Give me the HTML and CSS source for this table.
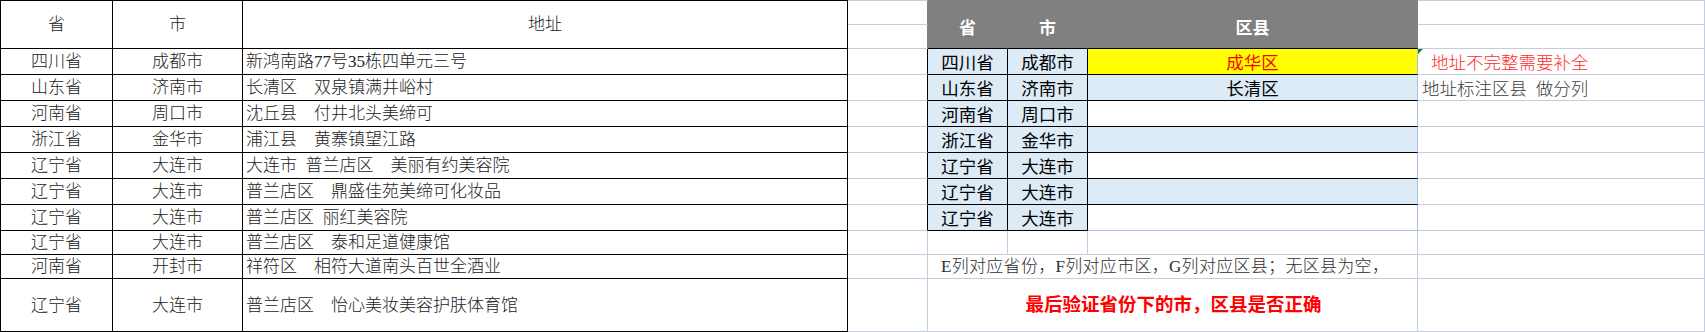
FILE: index.html
```html
<!DOCTYPE html>
<html lang="zh-CN">
<head>
<meta charset="utf-8">
<title>地址分列</title>
<link rel="stylesheet" href="styles.css">
</head>
<body>
<div class="sheet">
  <!-- row 1 -->
  <div class="c lt t l span2 ctr">省</div>
  <div class="c lt t span2 ctr">市</div>
  <div class="c lt t span2 ctr">地址</div>
  <div class="c t d-gray"></div>
  <div class="c t gh span2 ctr">省</div>
  <div class="c t gh span2 ctr">市</div>
  <div class="c t gh gh-last span2 ctr">区县</div>
  <div class="c t"></div>
  <!-- row 2 -->
  <div class="c d-gray"></div>
  <div class="c"></div>

  <!-- row 3 -->
  <div class="c lt l ctr">四川省</div>
  <div class="c lt ctr">成都市</div>
  <div class="c lt addr">新鸿南路77号35栋四单元三号</div>
  <div class="c d-black"></div>
  <div class="c ef ctr">四川省</div>
  <div class="c ef ctr">成都市</div>
  <div class="c g g-yellow ctr">成华区</div>
  <div class="c note note-red mark">地址不完整需要补全</div>

  <!-- row 4 -->
  <div class="c lt l ctr">山东省</div>
  <div class="c lt ctr">济南市</div>
  <div class="c lt addr">长清区　双泉镇满井峪村</div>
  <div class="c d-black"></div>
  <div class="c ef ctr">山东省</div>
  <div class="c ef ctr">济南市</div>
  <div class="c g g-blue ctr">长清区</div>
  <div class="c note">地址标注区县&ensp;做分列</div>

  <!-- row 5 -->
  <div class="c lt l ctr">河南省</div>
  <div class="c lt ctr">周口市</div>
  <div class="c lt addr">沈丘县　付井北头美缔可</div>
  <div class="c d-black"></div>
  <div class="c ef ctr">河南省</div>
  <div class="c ef ctr">周口市</div>
  <div class="c g"></div>
  <div class="c"></div>

  <!-- row 6 -->
  <div class="c lt l ctr">浙江省</div>
  <div class="c lt ctr">金华市</div>
  <div class="c lt addr">浦江县　黄寨镇望江路</div>
  <div class="c d-black"></div>
  <div class="c ef ctr">浙江省</div>
  <div class="c ef ctr">金华市</div>
  <div class="c g g-blue"></div>
  <div class="c"></div>

  <!-- row 7 -->
  <div class="c lt l ctr">辽宁省</div>
  <div class="c lt ctr">大连市</div>
  <div class="c lt addr">大连市&ensp;普兰店区　美丽有约美容院</div>
  <div class="c d-black"></div>
  <div class="c ef ctr">辽宁省</div>
  <div class="c ef ctr">大连市</div>
  <div class="c g"></div>
  <div class="c"></div>

  <!-- row 8 -->
  <div class="c lt l ctr">辽宁省</div>
  <div class="c lt ctr">大连市</div>
  <div class="c lt addr">普兰店区　鼎盛佳苑美缔可化妆品</div>
  <div class="c d-black"></div>
  <div class="c ef ctr">辽宁省</div>
  <div class="c ef ctr">大连市</div>
  <div class="c g g-blue"></div>
  <div class="c"></div>

  <!-- row 9 -->
  <div class="c lt l ctr">辽宁省</div>
  <div class="c lt ctr">大连市</div>
  <div class="c lt addr">普兰店区&ensp;丽红美容院</div>
  <div class="c d-black"></div>
  <div class="c ef ctr">辽宁省</div>
  <div class="c ef ctr">大连市</div>
  <div class="c g g-end"></div>
  <div class="c"></div>

  <!-- row 10 -->
  <div class="c lt l ctr">辽宁省</div>
  <div class="c lt ctr">大连市</div>
  <div class="c lt addr">普兰店区　泰和足道健康馆</div>
  <div class="c"></div>
  <div class="c"></div>
  <div class="c"></div>
  <div class="c"></div>
  <div class="c"></div>

  <!-- row 11 -->
  <div class="c lt l ctr">河南省</div>
  <div class="c lt ctr">开封市</div>
  <div class="c lt addr">祥符区　相符大道南头百世全酒业</div>
  <div class="c"></div>
  <div class="c span3 explain">E列对应省份，F列对应市区，G列对应区县；无区县为空，</div>
  <div class="c"></div>

  <!-- row 12 -->
  <div class="c lt l ctr">辽宁省</div>
  <div class="c lt ctr">大连市</div>
  <div class="c lt addr">普兰店区　怡心美妆美容护肤体育馆</div>
  <div class="c"></div>
  <div class="c span3 ctr verify">最后验证省份下的市，区县是否正确</div>
  <div class="c"></div>
</div>
</body>
</html>
```

FILE: styles.css
```css
* {
  box-sizing: border-box;
}

html, body {
  margin: 0;
  padding: 0;
  background: #ffffff;
}

body {
  width: 1705px;
  height: 332px;
  overflow: hidden;
  font-family: "Liberation Serif", "Noto Sans CJK SC", serif;
  font-size: 17px;
  color: #141414;
}

.sheet {
  display: grid;
  grid-template-columns: 113px 130px 605px 80px 80px 80px 330px 287px;
  grid-template-rows: 25px 24px 26px 26px 26px 26px 26px 26px 26px 24px 24px 53px;
}

.c {
  display: flex;
  align-items: center;
  min-width: 0;
  white-space: nowrap;
  overflow: visible;
  border-right: 1px solid #c6cce0;
  border-bottom: 1px solid #c6cce0;
  line-height: 1;
}

.t {
  border-top: 1px solid #c6cce0;
}

.l {
  border-left: 1px solid #000;
}

.span2 {
  grid-row: span 2;
}

.span3 {
  grid-column: span 3;
}

.ctr {
  justify-content: center;
}

/* left table */
.lt {
  border-right-color: #000;
  border-bottom-color: #000;
  font-weight: 300;
  color: #222;
}

.lt.t {
  border-top-color: #000;
}

.addr {
  padding-left: 3px;
}

/* column D right edges */
.d-gray {
  border-right-color: #808080;
}

.d-black {
  border-right-color: #000;
}

/* gray header of the right table */
.gh {
  background: #808080;
  color: #ffffff;
  font-family: "Noto Sans CJK SC", sans-serif;
  font-weight: 700;
  font-size: 17px;
  border-top-color: #808080;
  border-right-color: #808080;
  border-bottom-color: #000;
  padding-top: 3px;
}

/* province / city cells */
.ef {
  background: #ddebf7;
  border-right-color: #000;
  border-bottom-color: #000;
  font-family: "Noto Sans CJK SC", sans-serif;
  font-size: 17.5px;
  color: #000;
}

/* district column */
.g {
  border-right-color: #a9c2e4;
  border-bottom-color: #000;
  font-family: "Noto Sans CJK SC", sans-serif;
  font-size: 17.5px;
  color: #000;
}

.g-yellow {
  background: #ffff00;
  color: #ff0000;
}

.g-blue {
  background: #ddebf7;
}

.g-end {
  border-bottom-color: #a9c2e4;
}

/* notes in column H */
.note {
  padding-left: 4px;
  font-family: "Noto Sans CJK SC", sans-serif;
  font-size: 17.5px;
  font-weight: 300;
  color: #3c3c3c;
}

.note-red {
  padding-left: 13px;
  color: #ff2b2b;
}

.mark {
  position: relative;
}

.mark::before {
  content: "";
  position: absolute;
  left: 0;
  top: 0;
  width: 0;
  height: 0;
  border-top: 5px solid #1e7a34;
  border-right: 5px solid transparent;
}

/* explanation rows */
.explain {
  padding-left: 13px;
  color: #2e2e2e;
  font-weight: 300;
  letter-spacing: 0.3px;
}

.verify {
  color: #ff0000;
  font-weight: 700;
  font-size: 18.5px;
  padding-left: 2px;
}
```
